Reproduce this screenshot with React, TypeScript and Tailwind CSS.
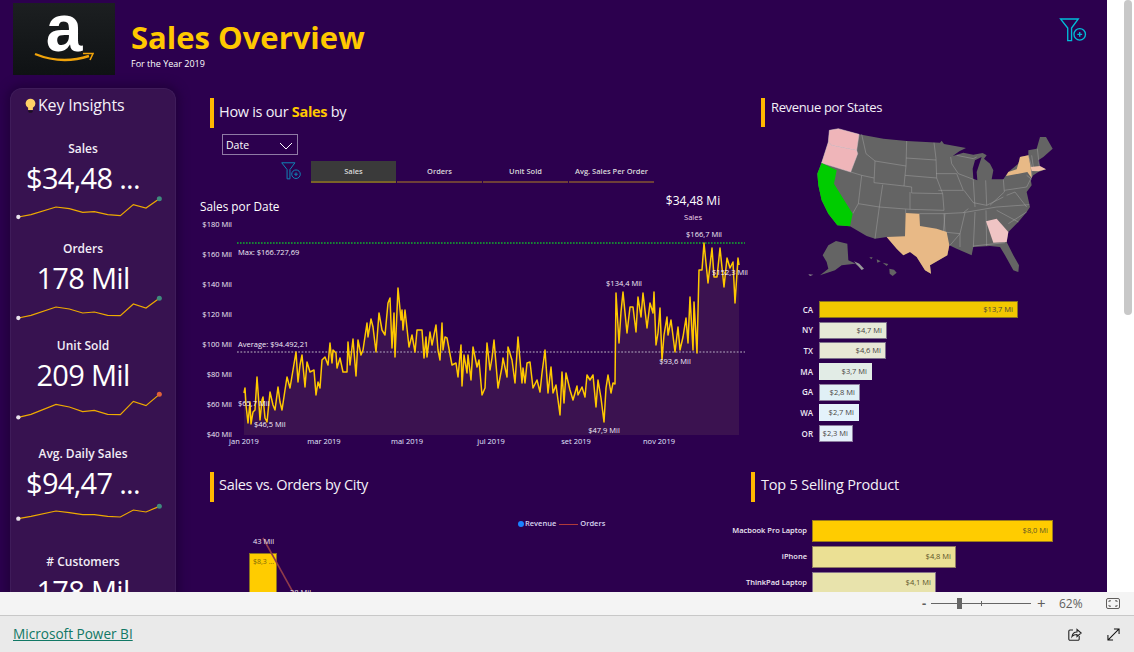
const FONT = "font-['Open_Sans',sans-serif]";

// daily sales traced in page pixels
const salesLine = [
  [244, 393], [245, 388], [246, 405], [248, 423], [250, 402], [251, 424], [253, 412], [255, 410], [257, 377], [259, 405], [260, 420], [262, 400], [263, 397], [265, 418], [267, 422], [270, 392], [273, 405], [275, 410], [278, 387], [280, 402], [282, 410], [285, 390], [287, 377], [290, 388], [293, 370], [296, 352], [298, 382], [300, 365], [302, 355], [305, 387], [307, 362], [310, 372], [314, 370], [316, 395], [318, 382], [320, 388], [322, 360], [325, 357], [328, 365], [330, 343], [332, 363], [333, 350], [336, 353], [337, 368], [340, 358], [343, 372], [347, 372], [348, 342], [350, 365], [353, 339], [356, 376], [358, 340], [361, 355], [363, 350], [367, 323], [368, 337], [371, 319], [373, 327], [376, 352], [379, 313], [382, 330], [385, 335], [388, 303], [390, 298], [392, 348], [394, 313], [395, 357], [398, 288], [401, 320], [402, 310], [403, 330], [405, 310], [409, 347], [412, 335], [415, 352], [417, 330], [422, 330], [424, 358], [426, 337], [427, 357], [430, 332], [432, 345], [436, 325], [438, 350], [440, 360], [442, 323], [443, 350], [445, 337], [447, 338], [452, 365], [456, 363], [458, 377], [461, 345], [462, 386], [464, 355], [467, 373], [468, 355], [471, 380], [473, 347], [477, 367], [479, 360], [482, 395], [485, 388], [487, 343], [490, 370], [492, 358], [494, 340], [498, 388], [502, 367], [503, 358], [507, 377], [508, 347], [512, 360], [515, 383], [518, 337], [522, 383], [523, 368], [525, 383], [527, 363], [530, 362], [533, 388], [537, 380], [540, 392], [542, 373], [545, 350], [548, 393], [551, 367], [553, 393], [556, 385], [560, 415], [562, 372], [564, 403], [566, 373], [570, 390], [573, 400], [577, 386], [578, 395], [582, 387], [585, 397], [587, 375], [590, 380], [593, 375], [596, 407], [598, 380], [601, 398], [604, 422], [606, 388], [608, 375], [611, 393], [613, 383], [615, 384], [616, 293], [619, 343], [621, 312], [623, 292], [627, 333], [630, 307], [633, 307], [636, 332], [638, 297], [641, 317], [643, 293], [647, 328], [650, 303], [653, 313], [654, 292], [656, 345], [658, 333], [660, 308], [662, 360], [664, 335], [667, 317], [668, 335], [671, 320], [675, 352], [678, 327], [680, 350], [683, 337], [686, 318], [688, 343], [690, 297], [693, 350], [694, 302], [697, 353], [699, 270], [702, 270], [704, 243], [706, 263], [708, 283], [712, 248], [714, 277], [717, 277], [720, 248], [724, 287], [727, 258], [730, 268], [733, 262], [735, 303], [738, 258], [739, 265],
];
const linePoints = salesLine.map((p) => p.join(',')).join(' ');
const areaPoints = `244,435 ${linePoints} 739,435`;

const yTicks = [['$180 Mil', 224], ['$160 Mil', 254], ['$140 Mil', 284], ['$120 Mil', 314], ['$100 Mil', 344], ['$80 Mil', 374], ['$60 Mil', 404], ['$40 Mil', 434]] as const;
const xTicks = [['jan 2019', 244], ['mar 2019', 324], ['mai 2019', 407], ['jul 2019', 491], ['set 2019', 576], ['nov 2019', 659]] as const;
const callouts = [['$166,7 Mil', 704, 237], ['$134,4 Mil', 624, 286], ['$93,6 Mil', 675, 364], ['$47,9 Mil', 604, 433], ['$152,3 Mil', 730, 275]] as const;

const sparkX = [52, 90, 165, 205, 245, 280, 320, 358, 397, 435, 475];

const kpis = [
  { label: 'Sales', value: '$34,48 ...', top: 580, ys: [652, 645, 622, 627, 638, 636, 645, 648, 615, 625, 597], dot: '#3f8a7d', className: 'mt-[26px]' },
  { label: 'Orders', value: '178 Mil', top: 215, ys: [290, 282, 257, 263, 275, 272, 282, 283, 248, 260, 231], dot: '#3f8a7d', className: 'mt-[18px]' },
  { label: 'Unit Sold', value: '209 Mil', top: 515, ys: [597, 588, 558, 566, 580, 576, 588, 589, 549, 562, 528], dot: '#e0623a', className: 'mt-[15px]' },
  { label: 'Avg. Daily Sales', value: '$94,47 ...', top: 840, ys: [902, 895, 879, 884, 890, 890, 895, 897, 876, 882, 865], dot: '#3f8a7d', className: 'mt-[26px]' },
  { label: '# Customers', value: '178 Mil', top: 0, ys: [], dot: '', className: 'mt-[26px]' },
];

const stateBars = [
  { name: 'CA', value: '$13,7 Mi', w: 'w-[199px]', bg: 'bg-[#f2c800] border-[#8a7420]' },
  { name: 'NY', value: '$4,7 Mi', w: 'w-[68px]', bg: 'bg-[#e6e9d7] border-[#7d6f8c]' },
  { name: 'TX', value: '$4,6 Mi', w: 'w-[67px]', bg: 'bg-[#e8e8d5] border-[#7d6f8c]' },
  { name: 'MA', value: '$3,7 Mi', w: 'w-[53px]', bg: 'bg-[#e2ece6] border-[#e2ece6]' },
  { name: 'GA', value: '$2,8 Mi', w: 'w-[41px]', bg: 'bg-[#e0f0f6] border-[#8d7ea0]' },
  { name: 'WA', value: '$2,7 Mi', w: 'w-[40px]', bg: 'bg-[#e4f2fb] border-[#e4f2fb]' },
  { name: 'OR', value: '$2,3 Mi', w: 'w-[34px]', bg: 'bg-[#e6f0fb] border-[#8d7ea0]' },
];

const productBars = [
  { name: 'Macbook Pro Laptop', value: '$8,0 Mi', w: 'w-[241px]', bg: 'bg-[#ffcc00] border-[#9c7c1c]' },
  { name: 'iPhone', value: '$4,8 Mi', w: 'w-[144px]', bg: 'bg-[#ebe094] border-[#8f7a64]' },
  { name: 'ThinkPad Laptop', value: '$4,1 Mi', w: 'w-[124px]', bg: 'bg-[#e8e3ac] border-[#85708a]' },
];

// state borders, in the map's own coordinates
const stateLines = [
  '305,127 318,185 345,207 342,272', '345,207 438,222', '440,147 438,222 435,250 432,282', '522,152 528,200 530,258 548,305 552,355',
  '438,198 528,204', '435,250 530,258', '342,272 432,282 455,285 455,303 548,305', '368,278 358,345 450,352 552,355', '450,300 450,352',
  '305,250 295,335 358,345', '305,250 342,258', '272,240 305,250', '295,335 278,365', '358,345 345,440', '437,352 437,363',
  '478,365 552,365 555,420', '528,245 590,245 610,295', '572,195 575,215 595,245', '535,295 610,295', '552,365 610,362 625,350',
  '555,365 550,420 600,425 600,465', '600,425 615,362', '610,362 710,345 808,338', '640,268 645,345', '677,265 680,340', '595,245 640,262 640,268',
  '730,262 733,300 690,340', '733,295 800,285', '612,295 640,332 680,340 730,315', '740,310 765,300 800,345', '645,360 640,465', '678,355 680,462',
  '710,355 775,390', '640,462 735,452', '805,190 815,225 815,255 800,285', '815,190 820,225', '832,170 838,222', '800,250 815,262', '600,425 570,460',
  '745,395 800,360', '590,190 640,200 650,195',
];

function Heading({ bar, children }: { bar: string; children: React.ReactNode }) {
  return (
    <div className="flex items-stretch">
      <div className={`w-1 bg-[#ffb800] ${bar}`} />
      {children}
    </div>
  );
}

function FilterPlus({ className }: { className: string }) {
  return (
    <svg viewBox="0 0 28 25" fill="none" stroke="currentColor" strokeWidth="1.4" className={className}>
      <path d="M1 1H19.5L12.5 10.5V23.5H8.5V10.5Z" />
      <circle cx="21" cy="17" r="6" />
      <path d="M21 14.5V19.5M18.5 17H23.5" />
    </svg>
  );
}

function Kpi({ kpi }: { kpi: (typeof kpis)[number] }) {
  const pts = kpi.ys.map((y, i) => `${sparkX[i]},${y}`).join(' ');
  return (
    <div className={`shrink-0 ${kpi.className}`}>
      <div className="h-4 pr-5 text-center text-[12px] leading-4 font-semibold text-[#f2edf6]">{kpi.label}</div>
      <div className="mt-1 h-[34px] pr-5 text-center text-[29px] leading-[34px] tracking-[-0.7px] whitespace-nowrap text-white">{kpi.value}</div>
      {kpi.ys.length > 0 && (
        <svg viewBox={`30 ${kpi.top} 498 90`} className="-mt-0.5 block h-[30px] w-[166px]">
          <polyline points={pts} fill="none" stroke="#eeaa00" strokeWidth="3.6" />
          <circle cx={52} cy={kpi.ys[0]} r="6.5" fill="#e8e2ec" />
          <circle cx={475} cy={kpi.ys[10]} r="7.5" fill={kpi.dot} />
        </svg>
      )}
    </div>
  );
}

function SalesChart() {
  const label = 'fill-[#f2eef8] text-[7.5px] font-medium';
  return (
    <svg viewBox="195 190 560 258" className={`mt-[7px] block h-[258px] w-[560px] ${FONT}`}>
      <text x="200" y="211" className="fill-white text-[11.8px]">Sales por Date</text>
      {yTicks.map(([t, y]) => (
        <text key={t} x="232" y={y + 2.5} textAnchor="end" className={label}>{t}</text>
      ))}
      {xTicks.map(([t, x]) => (
        <text key={t} x={x} y="444" textAnchor="middle" className="fill-[#e2e8ff] text-[7.5px] font-medium">{t}</text>
      ))}
      <polygon points={areaPoints} fill="#3b1250" />
      <line x1="237" y1="243" x2="745" y2="243" stroke="#11b02e" strokeWidth="1.4" strokeDasharray="1.6 1.4" />
      <line x1="237" y1="352" x2="745" y2="352" stroke="#8d7a9c" strokeWidth="1.4" strokeDasharray="1.8 1.6" />
      <polyline points={linePoints} fill="none" stroke="#ffc800" strokeWidth="1.5" strokeLinejoin="round" />
      <text x="238" y="255" className={label}>Max: $166.727,69</text>
      <text x="238" y="347" className={label}>Average: $94.492,21</text>
      <text x="238" y="406" className={label}>$65,7 Mil</text>
      <text x="254" y="427" className={label}>$46,5 Mil</text>
      {callouts.map(([t, x, y]) => (
        <text key={t} x={x} y={y} textAnchor="middle" className={label}>{t}</text>
      ))}
      <text x="693" y="205" textAnchor="middle" className="fill-white text-[12px]">$34,48 Mi</text>
      <text x="693" y="220" textAnchor="middle" className="fill-[#f0d8ea] text-[7.5px]">Sales</text>
    </svg>
  );
}

function UsMap() {
  return (
    <svg viewBox="129 105 780 465" className="ml-[48px] block h-[155px] w-[260px]">
      <path fill="#646464" d="M208,115 L235,110 L297,127 L370,140 L440,147 L540,152 L545,146 L552,156 L585,162 L618,168 L598,178 L578,192 L610,182 L640,188 L668,183 L680,190 L672,200 L690,215 L700,235 L695,262 L730,262 L738,250 L745,240 L775,215 L780,195 L805,190 L805,175 L830,170 L840,135 L858,135 L878,170 L850,195 L835,205 L840,225 L858,232 L835,240 L820,250 L812,262 L815,280 L800,300 L810,345 L800,360 L775,390 L745,420 L740,450 L760,490 L777,520 L775,540 L760,535 L735,490 L720,465 L690,462 L640,465 L635,490 L590,470 L568,460 L562,490 L510,520 L513,545 L495,535 L470,495 L450,480 L430,490 L410,470 L380,435 L345,440 L320,432 L270,403 L232,400 L205,365 L185,325 L175,280 L172,245 L185,210 L205,150 Z" />
      <polygon fill="#2c004e" points="645,205 665,195 650,240 652,265 640,260 638,230" />
      {stateLines.map((d) => (
        <polyline key={d} points={d} fill="none" stroke="#a3a3a3" strokeWidth="1.5" />
      ))}
      <polygon fill="#efb5b9" stroke="#d9c4cc" strokeWidth="1.5" points="208,115 235,110 297,127 290,175 240,165 215,160 205,150" />
      <polygon fill="#efb5b9" stroke="#d9c4cc" strokeWidth="1.5" points="205,150 215,160 240,165 290,175 293,185 272,240 185,213" />
      <polygon fill="#00cc00" points="185,213 230,235 222,275 278,365 270,403 232,400 205,365 185,325 175,280 172,245" />
      <polygon fill="#e8b986" points="738,252 745,240 770,232 778,205 780,195 805,190 812,225 815,258 802,240" />
      <polygon fill="#efbfa8" points="812,225 840,222 858,232 835,238 815,237" />
      <polygon fill="#e8b986" points="437,363 478,365 480,402 530,410 560,420 568,460 562,490 510,520 513,545 495,535 470,495 450,480 430,490 410,470 380,435 435,433" />
      <polygon fill="#efc4c4" points="678,388 710,380 745,420 740,450 700,452" />
      <polygon fill="#646464" points="205,460 228,447 262,455 265,505 298,520 310,532 285,515 245,520 225,535 180,550 205,530 200,510 188,490" />
      <polygon fill="#9a9a9a" points="282,508 298,515 312,530 305,534" />
      <polygon fill="#646464" points="388,530 402,533 410,542 398,552 389,545" />
      <polygon fill="#646464" points="368,512 385,516 380,522" />
      <polygon fill="#646464" points="350,502 362,508 352,512" />
      <polygon fill="#646464" points="328,496 338,496 334,502" />
      <polygon fill="#8d8d8d" points="145,547 160,548 150,552" />
    </svg>
  );
}

function StateBars() {
  return (
    <div className="mt-[19px] ml-[30px] flex flex-col gap-[3.7px]">
      {stateBars.map((b) => (
        <div key={b.name} className="flex h-[17px] items-center gap-1.5">
          <div className="w-[28px] text-right text-[8px] font-semibold text-[#eee8f4]">{b.name}</div>
          <div className={`flex h-full items-center justify-end border pr-1 text-[7.5px] font-medium text-[#47443f] ${b.w} ${b.bg}`}>{b.value}</div>
        </div>
      ))}
    </div>
  );
}

function CityChart() {
  return (
    <>
      <div className="mt-4 flex h-3 items-center pl-[323px] text-[7.5px] font-semibold text-[#d8d4ee]">
        <span className="size-[6px] rounded-full bg-[#1a82ff]" />
        <span className="ml-px">Revenue</span>
        <span className="ml-[3px] h-px w-[19px] bg-[#b03a3a]" />
        <span className="ml-0.5">Orders</span>
      </div>
      <svg viewBox="195 530 200 62" className={`block h-[62px] w-[200px] ${FONT}`}>
        <rect x="249.5" y="553.5" width="27" height="40" fill="#ffcc00" stroke="#8d7420" />
        <text x="253" y="564" className="fill-[#806808] text-[7px]">$8,3 ...</text>
        <line x1="263" y1="538" x2="294" y2="594" stroke="#8f3b4a" strokeWidth="1.6" />
        <text x="253" y="544" className="fill-[#eee8f4] text-[7.5px] font-medium">43 Mil</text>
        <text x="290" y="595" className="fill-[#eee8f4] text-[7.5px] font-medium">28 Mil</text>
      </svg>
    </>
  );
}

function ProductBars() {
  return (
    <div className="mt-[18px] flex flex-col gap-1">
      {productBars.map((b) => (
        <div key={b.name} className="flex h-[22px] items-center gap-[5px]">
          <div className="w-[82px] text-right text-[7.5px] font-semibold whitespace-nowrap text-[#eee8f4]">{b.name}</div>
          <div className={`flex h-full items-center justify-end border pr-1 text-[7.5px] font-medium text-[#5c5528] ${b.w} ${b.bg}`}>{b.value}</div>
        </div>
      ))}
    </div>
  );
}

export default function App() {
  return (
    <div className={`flex h-[652px] w-[1134px] flex-col overflow-hidden bg-white ${FONT}`}>
      <div className="flex h-[592px] shrink-0">
        <main className="w-[1107px] shrink-0 overflow-hidden bg-[#2c004e]">
          {/* header */}
          <header className="relative flex h-[88px] pt-[3px] pl-[13px]">
            <div className="relative h-[72px] w-[102px] bg-gradient-to-b from-[#1c1f21] to-[#0f1214] text-center">
              <div className="font-['Liberation_Sans',sans-serif] text-[66px] leading-[50px] font-bold text-white">a</div>
              <svg viewBox="0 0 60 12" fill="none" className="absolute top-[49px] left-[21px] h-3 w-[60px]">
                <path d="M1 2Q28 13 55 4" stroke="#f0a30a" strokeWidth="2.4" />
                <path d="M49 1.5L59 1.5L56 8" stroke="#f0a30a" strokeWidth="1.6" />
              </svg>
            </div>
            <div className="ml-4 pt-3">
              <h1 className="text-[31px] leading-[44px] font-bold whitespace-nowrap text-[#ffc800]">Sales Overview</h1>
              <p className="-mt-px text-[9px] leading-3 text-white">For the Year 2019</p>
            </div>
            <FilterPlus className="absolute top-[18px] left-[1059px] h-6 w-7 text-[#00bcd8]" />
          </header>

          <div className="flex h-[504px]">
            {/* key insights */}
            <aside className="ml-2.5 flex h-[520px] w-[166px] shrink-0 flex-col overflow-hidden rounded-t-xl border border-b-0 border-[#3f1c5a] bg-[#371250] shadow-[0_0_10px_4px_#22003d]">
              <div className="mt-1.5 flex h-5 items-center pl-[14px]">
                <svg viewBox="0 0 12 16" className="h-[15px] w-[11px]">
                  <path d="M6 .5A5.3 5.3 0 0 0 3.4 10.4V13H8.6V10.4A5.3 5.3 0 0 0 6 .5Z" fill="#ffd166" />
                  <path d="M3.6 13.4H8.4V15L7 15.8H5L3.6 15Z" fill="#1b1020" />
                </svg>
                <span className="ml-0.5 text-[16px] leading-5 tracking-[-0.2px] whitespace-nowrap text-[#f4f0f8]">Key Insights</span>
              </div>
              {kpis.map((k) => (
                <Kpi key={k.label} kpi={k} />
              ))}
            </aside>

            <div className="ml-[19px] flex min-w-0 flex-1 flex-col">
              {/* top row */}
              <div className="flex h-[384px] shrink-0">
                <section className="w-[560px] shrink-0">
                  <div className="mt-2.5 ml-[15px]">
                    <Heading bar="h-[30px]">
                      <h2 className="ml-[5px] text-[14.5px] leading-[27px] tracking-[-0.3px] text-[#f4f0f8]">
                        How is our <span className="font-bold text-[#ffc800]">Sales</span> by
                      </h2>
                    </Heading>
                  </div>
                  <div className="mt-1.5 ml-[27px] flex h-[21px] w-[76px] items-center justify-between border border-[#8f7aa5] pt-0.5 pr-1 pl-[3px] text-[10.5px] text-white">
                    Date
                    <svg viewBox="0 0 14 8" fill="none" stroke="white" className="h-2 w-3.5">
                      <path d="M1 1L7 7L13 1" />
                    </svg>
                  </div>
                  <div className="mt-1.5 flex h-[22px] pl-[86px]">
                    <FilterPlus className="h-5 w-5 text-[#1083b5]" />
                    <div className="ml-2.5 flex gap-px">
                      <div className="flex w-[85px] items-center justify-center border-b-2 border-[#7a6428] bg-[#3a3a3a] pt-0.5 text-[7.5px] font-semibold text-[#d9d9d9]">Sales</div>
                      <div className="flex w-[85px] items-center justify-center border-b-2 border-[#6e4038] pt-0.5 text-[7.5px] font-semibold text-[#d9d9d9]">Orders</div>
                      <div className="flex w-[85px] items-center justify-center border-b-2 border-[#6e4038] pt-0.5 text-[7.5px] font-semibold text-[#d9d9d9]">Unit Sold</div>
                      <div className="flex w-[85px] items-center justify-center border-b-2 border-[#6e4038] pt-0.5 text-[7.5px] font-semibold whitespace-nowrap text-[#d9d9d9]">Avg. Sales Per Order</div>
                    </div>
                  </div>
                  <SalesChart />
                </section>
                <section className="flex-1">
                  <div className="mt-2.5 ml-1.5">
                    <Heading bar="h-[29px]">
                      <h2 className="ml-1.5 text-[13px] leading-[19px] tracking-[-0.35px] whitespace-nowrap text-[#f4f0f8]">Revenue por States</h2>
                    </Heading>
                  </div>
                  <UsMap />
                  <StateBars />
                </section>
              </div>

              {/* bottom row */}
              <div className="flex">
                <section className="w-[530px] shrink-0">
                  <div className="ml-[15px]">
                    <Heading bar="h-[30px]">
                      <h2 className="ml-[5px] text-[14.5px] leading-[26px] tracking-[-0.3px] text-[#f4f0f8]">Sales vs. Orders by City</h2>
                    </Heading>
                  </div>
                  <CityChart />
                </section>
                <section className="flex-1">
                  <div className="ml-[26px]">
                    <Heading bar="h-[30px]">
                      <h2 className="ml-1.5 text-[14.5px] leading-[26px] tracking-[-0.2px] text-[#f4f0f8]">Top 5 Selling Product</h2>
                    </Heading>
                  </div>
                  <ProductBars />
                </section>
              </div>
            </div>
          </div>
        </main>
        {/* page scrollbar */}
        <div className="flex-1 pl-[17px]">
          <div className="h-[315px] w-2 rounded-b-full rounded-t-full bg-[#c8c8c8]" />
        </div>
      </div>

      {/* zoom bar */}
      <div className="flex h-6 shrink-0 items-center border-b border-[#c8c8c8] bg-[#f4f4f4] pl-[922px] text-[#605e5c]">
        <span className="w-[9px] text-[13px] leading-none font-bold">-</span>
        <div className="relative h-px w-[100px] bg-[#666666]">
          <span className="absolute -top-[5px] left-[26px] h-[11px] w-[5px] bg-[#666666]" />
          <span className="absolute -top-[2px] left-[50px] h-[5px] w-px bg-[#666666]" />
        </div>
        <span className="ml-1.5 w-[22px] text-[15px] leading-none">+</span>
        <span className="w-[47px] text-[12px]">62%</span>
        <svg viewBox="0 0 14 11" fill="none" stroke="#605e5c" className="h-[11px] w-3.5">
          <rect x=".5" y=".5" width="13" height="10" rx="1.5" />
          <path d="M3 4V2.8H5M9 2.8H11V4M11 7V8.2H9M5 8.2H3V7" />
        </svg>
      </div>

      {/* footer */}
      <footer className="flex flex-1 items-center bg-[#eaeaea] pr-3.5 pl-[13px]">
        <a className="text-[13.6px] text-[#117865] underline">Microsoft Power BI</a>
        <svg viewBox="0 0 14 14" fill="none" stroke="#222222" strokeWidth="1.1" className="ml-auto h-[14px] w-[14px]">
          <path d="M5 3H2A1.2 1.2 0 0 0 .8 4.2V12A1.2 1.2 0 0 0 2 13.2H10A1.2 1.2 0 0 0 11.2 12V9" />
          <path d="M4 9.5C4.5 6.5 6.5 5 9 5V2.5L13.2 6L9 9.5V7.5C7 7.5 5.2 8 4 9.5Z" />
        </svg>
        <svg viewBox="0 0 14 14" fill="none" stroke="#111111" strokeWidth="1.1" className="ml-[25px] h-[13px] w-[13px]">
          <path d="M1 13L13 1M7.5 1H13V6.5M1 7.5V13H6.5" />
        </svg>
      </footer>
    </div>
  );
}
